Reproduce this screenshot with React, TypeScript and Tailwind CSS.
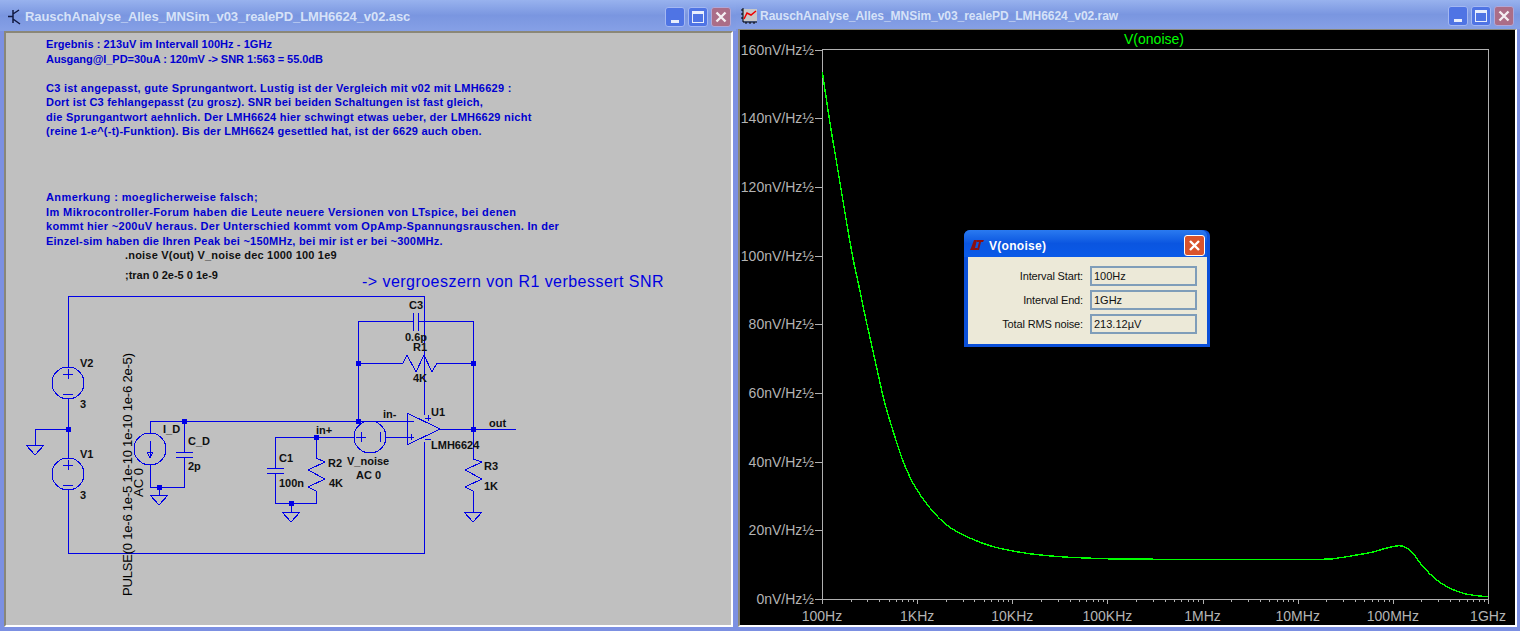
import React from 'react'

const note1 = [
  { t: 'Ergebnis : 213uV im Intervall 100Hz - 1GHz', c: 'tracking-[0.07px]' },
  { t: 'Ausgang@I_PD=30uA : 120mV -> SNR 1:563 = 55.0dB', c: 'tracking-[-0.06px]' },
  { t: '\u00a0', c: '' },
  { t: 'C3 ist angepasst, gute Sprungantwort. Lustig ist der Vergleich mit v02 mit LMH6629 :', c: 'tracking-[0.26px]' },
  { t: 'Dort ist C3 fehlangepasst (zu grosz). SNR bei beiden Schaltungen ist fast gleich,', c: 'tracking-[0.21px]' },
  { t: 'die Sprungantwort aehnlich. Der LMH6624 hier schwingt etwas ueber, der LMH6629 nicht', c: 'tracking-[0.25px]' },
  { t: '(reine 1-e^(-t)-Funktion). Bis der LMH6624 gesettled hat, ist der 6629 auch oben.', c: 'tracking-[0.23px]' },
]

const note2 = [
  { t: 'Anmerkung : moeglicherweise falsch;', c: 'tracking-[0.4px]' },
  { t: 'Im Mikrocontroller-Forum haben die Leute neuere Versionen von LTspice, bei denen', c: 'tracking-[0.4px]' },
  { t: 'kommt hier ~200uV heraus. Der Unterschied kommt vom OpAmp-Spannungsrauschen. In der', c: 'tracking-[0.31px]' },
  { t: 'Einzel-sim haben die Ihren Peak bei ~150MHz, bei mir ist er bei ~300MHz.', c: 'tracking-[0.22px]' },
]

const wires = [
  '68,367 68,296 424,296 424,415',
  '68,399 68,458',
  '68,490 68,553 424,553 424,442',
  '68,429 35,429 35,445',
  '150,433 150,421 407,421',
  '184,421 184,452',
  '184,457 184,487 150,487 150,465',
  '159,487 159,495',
  '275,468 275,437 354,437',
  '386,437 407,437',
  '275,473 275,503 316,503 316,491',
  '291,503 291,512',
  '316,437 316,458',
  '358,421 358,321 413,321',
  '418,321 473,321 473,459',
  '473,491 473,512',
  '358,363 403,363',
  '437,363 473,363',
  '440,429 516,429',
]

const zigzags = [
  '403,363 407,355 416,372 424,355 432,372 437,363',
  '316,458 325,462 308,470 325,479 308,487 316,491',
  '473,459 482,462 465,470 482,479 465,487 473,491',
]

const junctions = [
  [68, 429],
  [184, 421],
  [159, 487],
  [291, 503],
  [316, 437],
  [358, 421],
  [358, 363],
  [473, 363],
  [473, 429],
]

const grounds = [
  [35, 445],
  [159, 495],
  [291, 512],
  [473, 512],
]

const labels: [string, number, number][] = [
  ['V2', 80, 363],
  ['3', 80, 404],
  ['V1', 80, 454],
  ['3', 80, 495],
  ['I_D', 163, 429],
  ['C_D', 188, 441],
  ['2p', 188, 466],
  ['C1', 279, 458],
  ['100n', 279, 483],
  ['R2', 328, 463],
  ['4K', 329, 483],
  ['C3', 409, 305],
  ['0.6p', 405, 337],
  ['R1', 413, 347],
  ['4K', 413, 378],
  ['in-', 383, 414],
  ['U1', 431, 412],
  ['in+', 316, 430],
  ['V_noise', 347, 461],
  ['AC 0', 356, 475],
  ['LMH6624', 431, 445],
  ['out', 489, 423],
  ['R3', 484, 466],
  ['1K', 484, 486],
  [';tran 0 2e-5 0 1e-9', 125, 275],
]

const curvePoints = [
  [822.3, 71.7], [829, 116.7], [833.3, 143], [840, 183], [846.7, 223], [853.3, 260], [858.3, 283],
  [866, 320], [875, 360], [884, 400], [893.3, 431.7], [903.3, 461.7], [915, 486.7], [930, 508],
  [946.7, 525], [966.7, 536.7], [993.3, 546.7], [1026.7, 553.3], [1060, 556.7], [1093, 558.3],
  [1120, 559], [1200, 559.5], [1318, 559.3], [1338, 558], [1356.7, 555], [1373, 552], [1386.7, 548],
  [1396.7, 546], [1403, 546.3], [1411.7, 551.7], [1423, 566.7], [1436.7, 580], [1450, 588.3],
  [1463.3, 593.3], [1476.7, 595.7], [1487.7, 596.7],
]

// catmull-rom through the traced points
function curvePath(pts: number[][]) {
  let d = `M${pts[0][0]} ${pts[0][1]}`
  for (let i = 0; i < pts.length - 1; i++) {
    const p0 = pts[Math.max(i - 1, 0)]
    const p1 = pts[i]
    const p2 = pts[i + 1]
    const p3 = pts[Math.min(i + 2, pts.length - 1)]
    const c1x = p1[0] + (p2[0] - p0[0]) / 6
    const c1y = p1[1] + (p2[1] - p0[1]) / 6
    const c2x = p2[0] - (p3[0] - p1[0]) / 6
    const c2y = p2[1] - (p3[1] - p1[1]) / 6
    d += ` C${c1x} ${c1y} ${c2x} ${c2y} ${p2[0]} ${p2[1]}`
  }
  return d
}

const yLabels = ['160', '140', '120', '100', '80', '60', '40', '20', '0']
const xLabels = ['100Hz', '1KHz', '10KHz', '100KHz', '1MHz', '10MHz', '100MHz', '1GHz']
const decade = (1488 - 822) / 7

function TitleButtons() {
  return (
    <div className="flex items-center gap-[3px]">
      <div className="w-[20px] h-[20px] rounded-[3px] border border-[#a4b8f2] bg-[#4f74e4] flex items-end pl-[5px] pb-[3px]">
        <div className="w-[8px] h-[3px] bg-[#e8eefc]" />
      </div>
      <div className="w-[20px] h-[20px] rounded-[3px] border border-[#a4b8f2] bg-[#4f74e4] flex items-center justify-center">
        <div className="w-[12px] h-[12px] border border-[#e8eefc] border-t-[3px]" />
      </div>
      <div className="w-[20px] h-[20px] rounded-[3px] border border-[#b0a8d8] bg-[#ab6d87] flex items-center justify-center">
        <svg width="12" height="12" viewBox="0 0 12 12">
          <path d="M1.5 1.5L10.5 10.5M10.5 1.5L1.5 10.5" stroke="#f4eef2" strokeWidth="2.4" />
        </svg>
      </div>
    </div>
  )
}

function TransistorIcon() {
  return (
    <svg width="15" height="16" viewBox="0 0 15 16">
      <path d="M6 1V14M1 7.5H6M6 5L12 1M6 10L13 15" stroke="#101840" strokeWidth="1.5" fill="none" />
    </svg>
  )
}

function ChartIcon() {
  return (
    <svg width="16" height="16" viewBox="0 0 16 16">
      <rect x="2" y="1" width="14" height="12" fill="#c8c8c8" />
      <path d="M2 0V14H16M0 2H2M0 6H2M0 10H2M5 14V16M9 14V16M13 14V16" stroke="#000" fill="none" />
      <path d="M3 11L6 5L10 7L15 3" stroke="#f00000" strokeWidth="1.5" fill="none" />
    </svg>
  )
}

function Schematic() {
  return (
    <svg viewBox="6 248 725 377" className="block w-[725px] h-[377px] flex-1">
      <g fill="none" stroke="#0000e6" shapeRendering="crispEdges">
        {wires.map((p, i) => (
          <polyline key={i} points={p} />
        ))}
        {zigzags.map((p, i) => (
          <polyline key={i} points={p} />
        ))}
        {grounds.map(([x, y], i) => (
          <polygon key={i} points={`${x - 9},${y} ${x + 9},${y} ${x},${y + 10}`} />
        ))}
        <circle cx="68" cy="383" r="16" />
        <circle cx="68" cy="474" r="16" />
        <circle cx="150" cy="449" r="16" />
        <circle cx="370" cy="437" r="16" />
        <polygon points="407,413 407,445 440,429" />
        <path d="M63 374H73M68 369V379M63 394H73" />
        <path d="M63 465H73M68 460V470M63 485H73" />
        <path d="M150 441V457M147 452H153L150 458Z" />
        <path d="M176 452H193M176 457H193" />
        <path d="M267 468H284M267 473H284" />
        <path d="M413 313V331M418 313V331" />
        <path d="M356 437H366M361 432V442M380 432V442" />
        <path d="M408 421H414M408 437H414M411 434V440" />
        <path d="M425 418H431M428 415V421M425 439H431" />
      </g>
      {junctions.map(([x, y], i) => (
        <rect key={i} x={x - 2} y={y - 2} width="5" height="5" fill="#0000e6" />
      ))}
      {labels.map(([t, x, y], i) => (
        <text
          key={i}
          x={x}
          y={y}
          dominantBaseline="central"
          className="font-['Liberation_Sans',sans-serif] font-bold text-[11px] fill-[#101010]"
        >
          {t}
        </text>
      ))}
      <text
        x="125"
        y="255"
        dominantBaseline="central"
        className="font-['Liberation_Sans',sans-serif] font-bold text-[11px] tracking-[0.2px] fill-[#101010]"
      >
        .noise V(out) V_noise dec 1000 100 1e9
      </text>
      <text
        x="362"
        y="281"
        dominantBaseline="central"
        className="font-['Liberation_Sans',sans-serif] text-[16px] tracking-[0.46px] fill-[#0000e0]"
      >
        {'-> vergroeszern von R1 verbessert SNR'}
      </text>
      <text
        transform="rotate(-90 127 596)"
        x="127"
        y="596"
        dominantBaseline="central"
        className="font-['Liberation_Sans',sans-serif] text-[13px] tracking-[-0.2px] fill-[#000]"
      >
        PULSE(0 1e-6 1e-5 1e-10 1e-10 1e-6 2e-5)
      </text>
      <text
        transform="rotate(-90 138 497)"
        x="138"
        y="497"
        dominantBaseline="central"
        className="font-['Liberation_Sans',sans-serif] text-[13px] fill-[#000]"
      >
        AC 0
      </text>
    </svg>
  )
}

function Plot() {
  const ticks: React.ReactNode[] = []
  for (let d = 0; d < 7; d++) {
    for (let m = 2; m < 10; m++) {
      const x = Math.round(822 + decade * (d + Math.log10(m)))
      ticks.push(<line key={`${d}-${m}`} x1={x} x2={x} y1="599" y2="602" />)
    }
  }
  return (
    <svg viewBox="740 30 775 594" className="block w-[775px] h-[594px]">
      <g stroke="#b0b0b0" fill="none" shapeRendering="crispEdges">
        <rect x="822" y="49" width="666" height="550" />
        {yLabels.map((_, i) => {
          const y = Math.round(49.5 + i * 68.7)
          return <line key={i} x1="815" x2="822" y1={y} y2={y} />
        })}
        {xLabels.map((_, i) => {
          const x = Math.round(822 + decade * i)
          return <line key={i} x1={x} x2={x} y1="599" y2="604" />
        })}
        {ticks}
      </g>
      {yLabels.map((v, i) => (
        <text
          key={i}
          x="814"
          y={49.5 + i * 68.7}
          textAnchor="end"
          dominantBaseline="central"
          className="font-['Liberation_Sans',sans-serif] text-[14px] fill-[#b4b4b4]"
        >
          {v}nV/Hz½
        </text>
      ))}
      {xLabels.map((v, i) => (
        <text
          key={i}
          x={822 + decade * i}
          y="616"
          textAnchor="middle"
          dominantBaseline="central"
          className="font-['Liberation_Sans',sans-serif] text-[14px] fill-[#b4b4b4]"
        >
          {v}
        </text>
      ))}
      <text
        x="1154"
        y="39"
        textAnchor="middle"
        dominantBaseline="central"
        className="font-['Liberation_Sans',sans-serif] text-[14px] fill-[#00ff00]"
      >
        V(onoise)
      </text>
      <path d={curvePath(curvePoints)} fill="none" stroke="#00ff00" strokeWidth="1.4" shapeRendering="crispEdges" />
    </svg>
  )
}

function Field({ label, value }: { label: string; value: string }) {
  return (
    <div className="flex items-center gap-[7px] h-[20px]">
      <div className="w-[112px] text-right tracking-[-0.15px]">{label}</div>
      <div className="w-[107px] h-[20px] border-2 border-[#7f9db9] pl-[2px] leading-[16px]">{value}</div>
    </div>
  )
}

function NoiseDialog() {
  return (
    <div className="absolute left-[224px] top-[200px] w-[246px] h-[117px] rounded-t-[6px] bg-[#0a4fd8] flex flex-col pl-[4px] pr-[3px] pb-[3px] font-['Liberation_Sans',sans-serif] text-[11px] text-[#111]">
      <div className="h-[27px] pt-[3px] flex items-center justify-between pr-[2px] -ml-[4px] pl-[5px] rounded-t-[6px] bg-linear-to-b from-[#2a7af0] via-[#0a55e0] to-[#0a5ae8]">
        <div className="flex items-center gap-[4px]">
          <svg width="16" height="12" viewBox="0 0 16 12">
            <path d="M5 1H8L6 9H9L8 11H1L2 9Z" fill="#8c1010" />
            <path d="M8 1H15L14 3H12L10 11H8L10 3H7.5Z" fill="#8c1010" />
          </svg>
          <span className="mt-[1px] text-[12px] text-white font-bold tracking-[0.3px]">V(onoise)</span>
        </div>
        <div className="w-[21px] h-[21px] rounded-[3px] border border-white bg-[#d9532c] flex items-center justify-center">
          <svg width="13" height="13" viewBox="0 0 13 13">
            <path d="M2 2L11 11M11 2L2 11" stroke="#fff" strokeWidth="2.4" />
          </svg>
        </div>
      </div>
      <div className="flex-1 bg-[#ece9d8] flex flex-col gap-[4px] pt-[9px] pl-[3px]">
        <Field label="Interval Start:" value="100Hz" />
        <Field label="Interval End:" value="1GHz" />
        <Field label="Total RMS noise:" value="213.12µV" />
      </div>
    </div>
  )
}

export default function App() {
  return (
    <div className="w-[1520px] h-[631px] flex overflow-hidden bg-[#7c90e2] font-['Liberation_Sans',sans-serif]">
      <div className="w-[736px] h-full flex flex-col pb-[4px]">
        <div className="h-[31px] pt-[2px] flex items-center justify-between pl-[7px] pr-[5px] bg-linear-to-b from-[#98b2ee] via-[#7a96e0] to-[#86a0e6]">
          <div className="flex items-center gap-[3px]">
            <TransistorIcon />
            <span className="font-bold text-[13px] tracking-[-0.08px] text-[#d6e2f8]">
              RauschAnalyse_Alles_MNSim_v03_realePD_LMH6624_v02.asc
            </span>
          </div>
          <TitleButtons />
        </div>
        <div className="flex-1 ml-[4px] mr-[3px] flex flex-col bg-[#c0c0c0] border-2 border-t-[#8a8778] border-l-[#8a8778] border-r-white border-b-white">
          <div className="pt-[4px] pl-[40px] text-[11px] leading-[14.5px] font-bold text-[#0000d0]">
            {note1.map((n, i) => (
              <div key={i} className={n.c}>{n.t}</div>
            ))}
            <div className="mt-[51.5px]">
              {note2.map((n, i) => (
                <div key={i} className={n.c}>{n.t}</div>
              ))}
            </div>
          </div>
          <Schematic />
        </div>
      </div>
      <div className="flex-1 h-full flex flex-col pb-[4px]">
        <div className="h-[29px] pt-[2px] flex items-center justify-between pl-[5px] pr-[6px] bg-linear-to-b from-[#98b2ee] via-[#7a96e0] to-[#86a0e6]">
          <div className="flex items-center gap-[3px]">
            <ChartIcon />
            <span className="font-bold text-[12px] tracking-[-0.04px] text-[#d6e2f8]">
              RauschAnalyse_Alles_MNSim_v03_realePD_LMH6624_v02.raw
            </span>
          </div>
          <TitleButtons />
        </div>
        <div className="flex-1 ml-[2px] mr-[3px] relative bg-black border-2 border-t-[1px] border-t-[#8a8778] border-l-[#8a8778] border-r-white border-b-white">
          <Plot />
          <NoiseDialog />
        </div>
      </div>
    </div>
  )
}
